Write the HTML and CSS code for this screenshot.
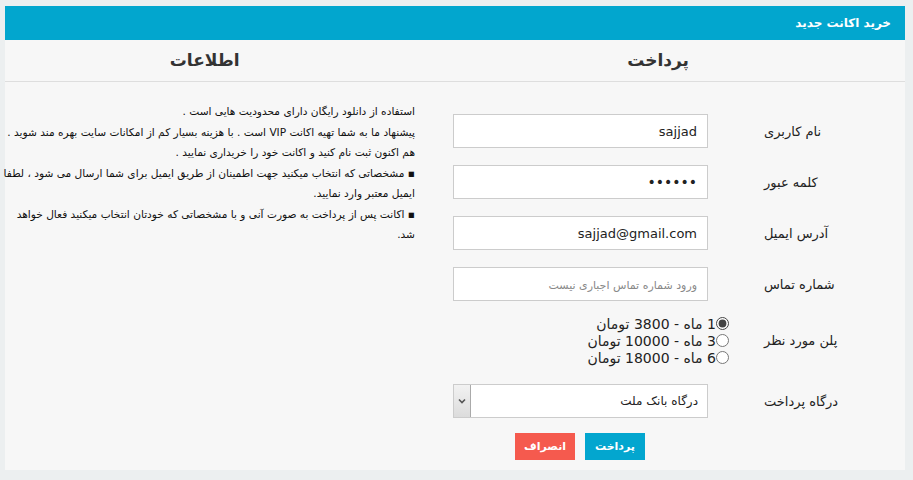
FILE: index.html
```html
<!DOCTYPE html>
<html lang="fa" dir="rtl">
<head>
  <meta charset="UTF-8">
  <title>خرید اکانت جدید</title>
  <link rel="stylesheet" href="styles.css">
</head>
<body>
  <div class="panel">
    <div class="panel-title">خرید اکانت جدید</div>
    <div class="cols-head">
      <h3 class="head-pay">پرداخت</h3>
      <h3 class="head-info">اطلاعات</h3>
    </div>
    <div class="panel-body">
      <form class="pay-form" onsubmit="return false">
        <div class="form-row">
          <label class="row-label">نام کاربری</label>
          <input class="field" type="text" value="sajjad">
        </div>
        <div class="form-row">
          <label class="row-label">کلمه عبور</label>
          <input class="field" type="password" value="123456">
        </div>
        <div class="form-row">
          <label class="row-label">آدرس ایمیل</label>
          <input class="field" type="text" value="sajjad@gmail.com">
        </div>
        <div class="form-row">
          <label class="row-label">شماره تماس</label>
          <input class="field" type="text" placeholder="ورود شماره تماس اجباری نیست">
        </div>
        <div class="form-row plan-row">
          <label class="row-label">پلن مورد نظر</label>
          <div class="plans">
            <label class="plan"><input type="radio" name="plan" checked>1 ماه - 3800 تومان</label>
            <label class="plan"><input type="radio" name="plan">3 ماه - 10000 تومان</label>
            <label class="plan"><input type="radio" name="plan">6 ماه - 18000 تومان</label>
          </div>
        </div>
        <div class="form-row">
          <label class="row-label">درگاه پرداخت</label>
          <div class="select-wrap">
            <select class="field select">
              <option>درگاه بانک ملت</option>
            </select>
            <span class="select-arrow">
              <svg width="8" height="6" viewBox="0 0 8 6"><path d="M1 1.5 L4 4.5 L7 1.5" fill="none" stroke="#555" stroke-width="1.6"/></svg>
            </span>
          </div>
        </div>
        <div class="actions">
          <button class="btn btn-pay">پرداخت</button>
          <button class="btn btn-cancel">انصراف</button>
        </div>
      </form>
      <div class="info">
        <p>استفاده از دانلود رایگان دارای محدودیت هایی است .</p>
        <p>پیشنهاد ما به شما تهیه اکانت VIP است . با هزینه بسیار کم از امکانات سایت بهره مند شوید .</p>
        <p>هم اکنون ثبت نام کنید و اکانت خود را خریداری نمایید .</p>
        <p>▪ مشخصاتی که انتخاب میکنید جهت اطمینان از طریق ایمیل برای شما ارسال می شود ، لطفا</p>
        <p>ایمیل معتبر وارد نمایید.</p>
        <p>▪ اکانت پس از پرداخت به صورت آنی و با مشخصاتی که خودتان انتخاب میکنید فعال خواهد</p>
        <p>شد.</p>
      </div>
    </div>
  </div>
</body>
</html>
```

FILE: styles.css
```css
/* General */
body {
  margin: 0;
  padding: 6px 8px 10px 5px;
  background-color: #eceff0;
  font-family: "DejaVu Sans", sans-serif;
  color: #333;
}

.panel {
  width: 900px;
  background-color: #f7f7f7;
}

.panel-title {
  height: 34px;
  line-height: 34px;
  padding-right: 14px;
  background-color: #02a6ce;
  color: #fff;
  font-size: 12px;
  font-weight: bold;
}

/* column headings */
.cols-head {
  display: flex;
  height: 41px;
  border-bottom: 1px solid #dedede;
}

.cols-head h3 {
  margin: 0;
  width: 450px;
  line-height: 41px;
  font-size: 17px;
  font-weight: bold;
  color: #333;
}

.head-pay {
  padding-right: 216px;
}

.head-info {
  padding-right: 215px;
}

.panel-body {
  display: flex;
  align-items: flex-start;
}

/* form */
.pay-form {
  width: 452px;
  flex-shrink: 0;
  padding-top: 32px;
  padding-bottom: 10px;
}

.form-row {
  display: flex;
  align-items: center;
  margin-bottom: 17px;
}

.row-label {
  width: 197px;
  flex-shrink: 0;
  box-sizing: border-box;
  padding-left: 56px;
  text-align: left;
  font-size: 13px;
  color: #222;
}

.field {
  width: 255px;
  height: 34px;
  box-sizing: border-box;
  padding: 4px 10px;
  border: 1px solid #ccc;
  background-color: #fff;
  font-family: "DejaVu Sans", sans-serif;
  font-size: 13px;
  color: #222;
  text-align: right;
}

.field[type="password"] {
  font-size: 14px;
}

.field::placeholder {
  color: #888;
  font-size: 11px;
}

/* radio plans */
.plan-row {
  margin-top: -3px;
  margin-bottom: 18px;
}

.plans {
  display: flex;
  flex-direction: column;
  margin-right: -21px;
}

.plan {
  display: flex;
  align-items: center;
  height: 17px;
  font-size: 14px;
  color: #222;
}

.plan input {
  margin: 0;
  width: 13px;
  height: 13px;
  accent-color: #444;
}

/* select */
.select-wrap {
  position: relative;
}

.select {
  appearance: none;
  -webkit-appearance: none;
  padding-right: 9px;
  font-size: 12px;
  text-align: right;
}

.select-arrow {
  position: absolute;
  left: 1px;
  top: 1px;
  width: 17px;
  height: 32px;
  box-sizing: border-box;
  border-right: 1px solid #aaa;
  background: linear-gradient(#f2f2f2, #dcdcdc);
  display: flex;
  align-items: center;
  justify-content: center;
  pointer-events: none;
}

/* buttons */
.actions {
  display: flex;
  gap: 10px;
  padding-right: 260px;
  margin-top: -2px;
}

.btn {
  width: 60px;
  height: 27px;
  border: none;
  color: #fff;
  font-family: "DejaVu Sans", sans-serif;
  font-size: 11px;
  font-weight: bold;
  cursor: pointer;
}

.btn-pay {
  background-color: #03a6cf;
}

.btn-cancel {
  background-color: #f55a4e;
}

/* info text */
.info {
  width: 448px;
  box-sizing: border-box;
  padding: 19px 38px 0 0;
  font-size: 10.6px;
  color: #111;
}

.info p {
  margin: 0;
  line-height: 20.5px;
  white-space: nowrap;
}
```
